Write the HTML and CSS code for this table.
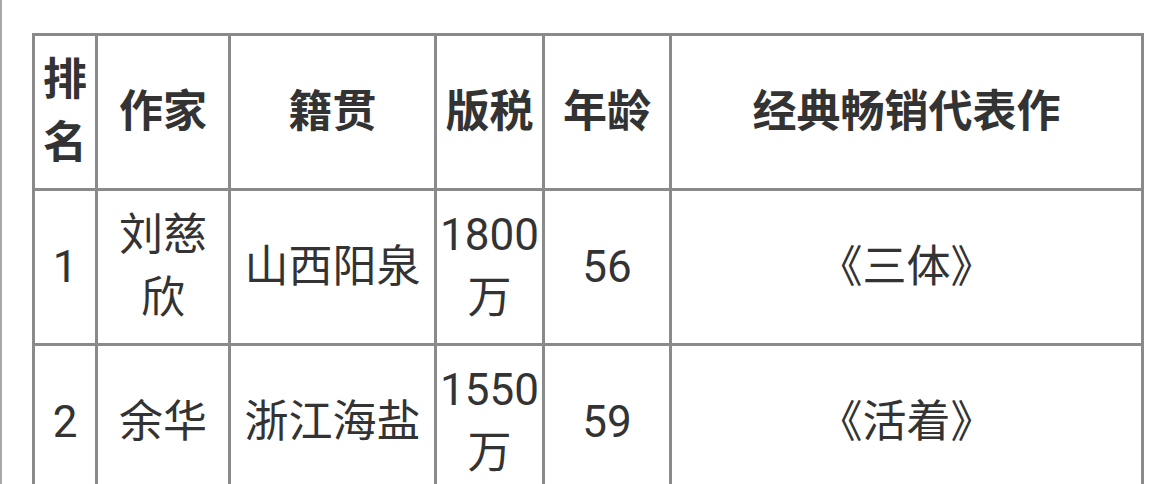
FILE: index.html
```html
<!DOCTYPE html>
<html lang="zh-CN">
<head>
<meta charset="utf-8">
<title>作家版税榜</title>
<link rel="stylesheet" href="styles.css">
</head>
<body>
<div class="page">
  <table class="rank">
    <colgroup>
      <col class="c1"><col class="c2"><col class="c3"><col class="c4"><col class="c5"><col class="c6">
    </colgroup>
    <thead>
      <tr>
        <th>排名</th>
        <th>作家</th>
        <th>籍贯</th>
        <th>版税</th>
        <th>年龄</th>
        <th>经典畅销代表作</th>
      </tr>
    </thead>
    <tbody>
      <tr>
        <td>1</td>
        <td>刘慈欣</td>
        <td>山西阳泉</td>
        <td>1800万</td>
        <td>56</td>
        <td>《三体》</td>
      </tr>
      <tr>
        <td>2</td>
        <td>余华</td>
        <td>浙江海盐</td>
        <td>1550万</td>
        <td>59</td>
        <td>《活着》</td>
      </tr>
    </tbody>
  </table>
</div>
</body>
</html>
```

FILE: styles.css
```css
html, body {
  margin: 0;
  padding: 0;
  background: #ffffff;
}

.page {
  box-sizing: border-box;
  min-height: 100vh;
  border-left: 2px solid #a8a8a8;
  padding: 33px 0 0 30px;
  font-family: Roboto, "Noto Sans CJK SC", sans-serif;
  color: #333333;
}

.rank {
  border-collapse: collapse;
  table-layout: fixed;
  width: 1112px;
  font-size: 44px;
  line-height: 63px;
}

.c1 { width: 63px; }
.c2 { width: 133px; }
.c3 { width: 206px; }
.c4 { width: 108px; }
.c5 { width: 127px; }
.c6 { width: 472px; }

.rank th,
.rank td {
  border: 3px solid #8a8a8a;
  padding: 13px 1px;
  text-align: center;
  vertical-align: middle;
  font-weight: 400;
}

.rank th {
  font-weight: 700;
}
```
